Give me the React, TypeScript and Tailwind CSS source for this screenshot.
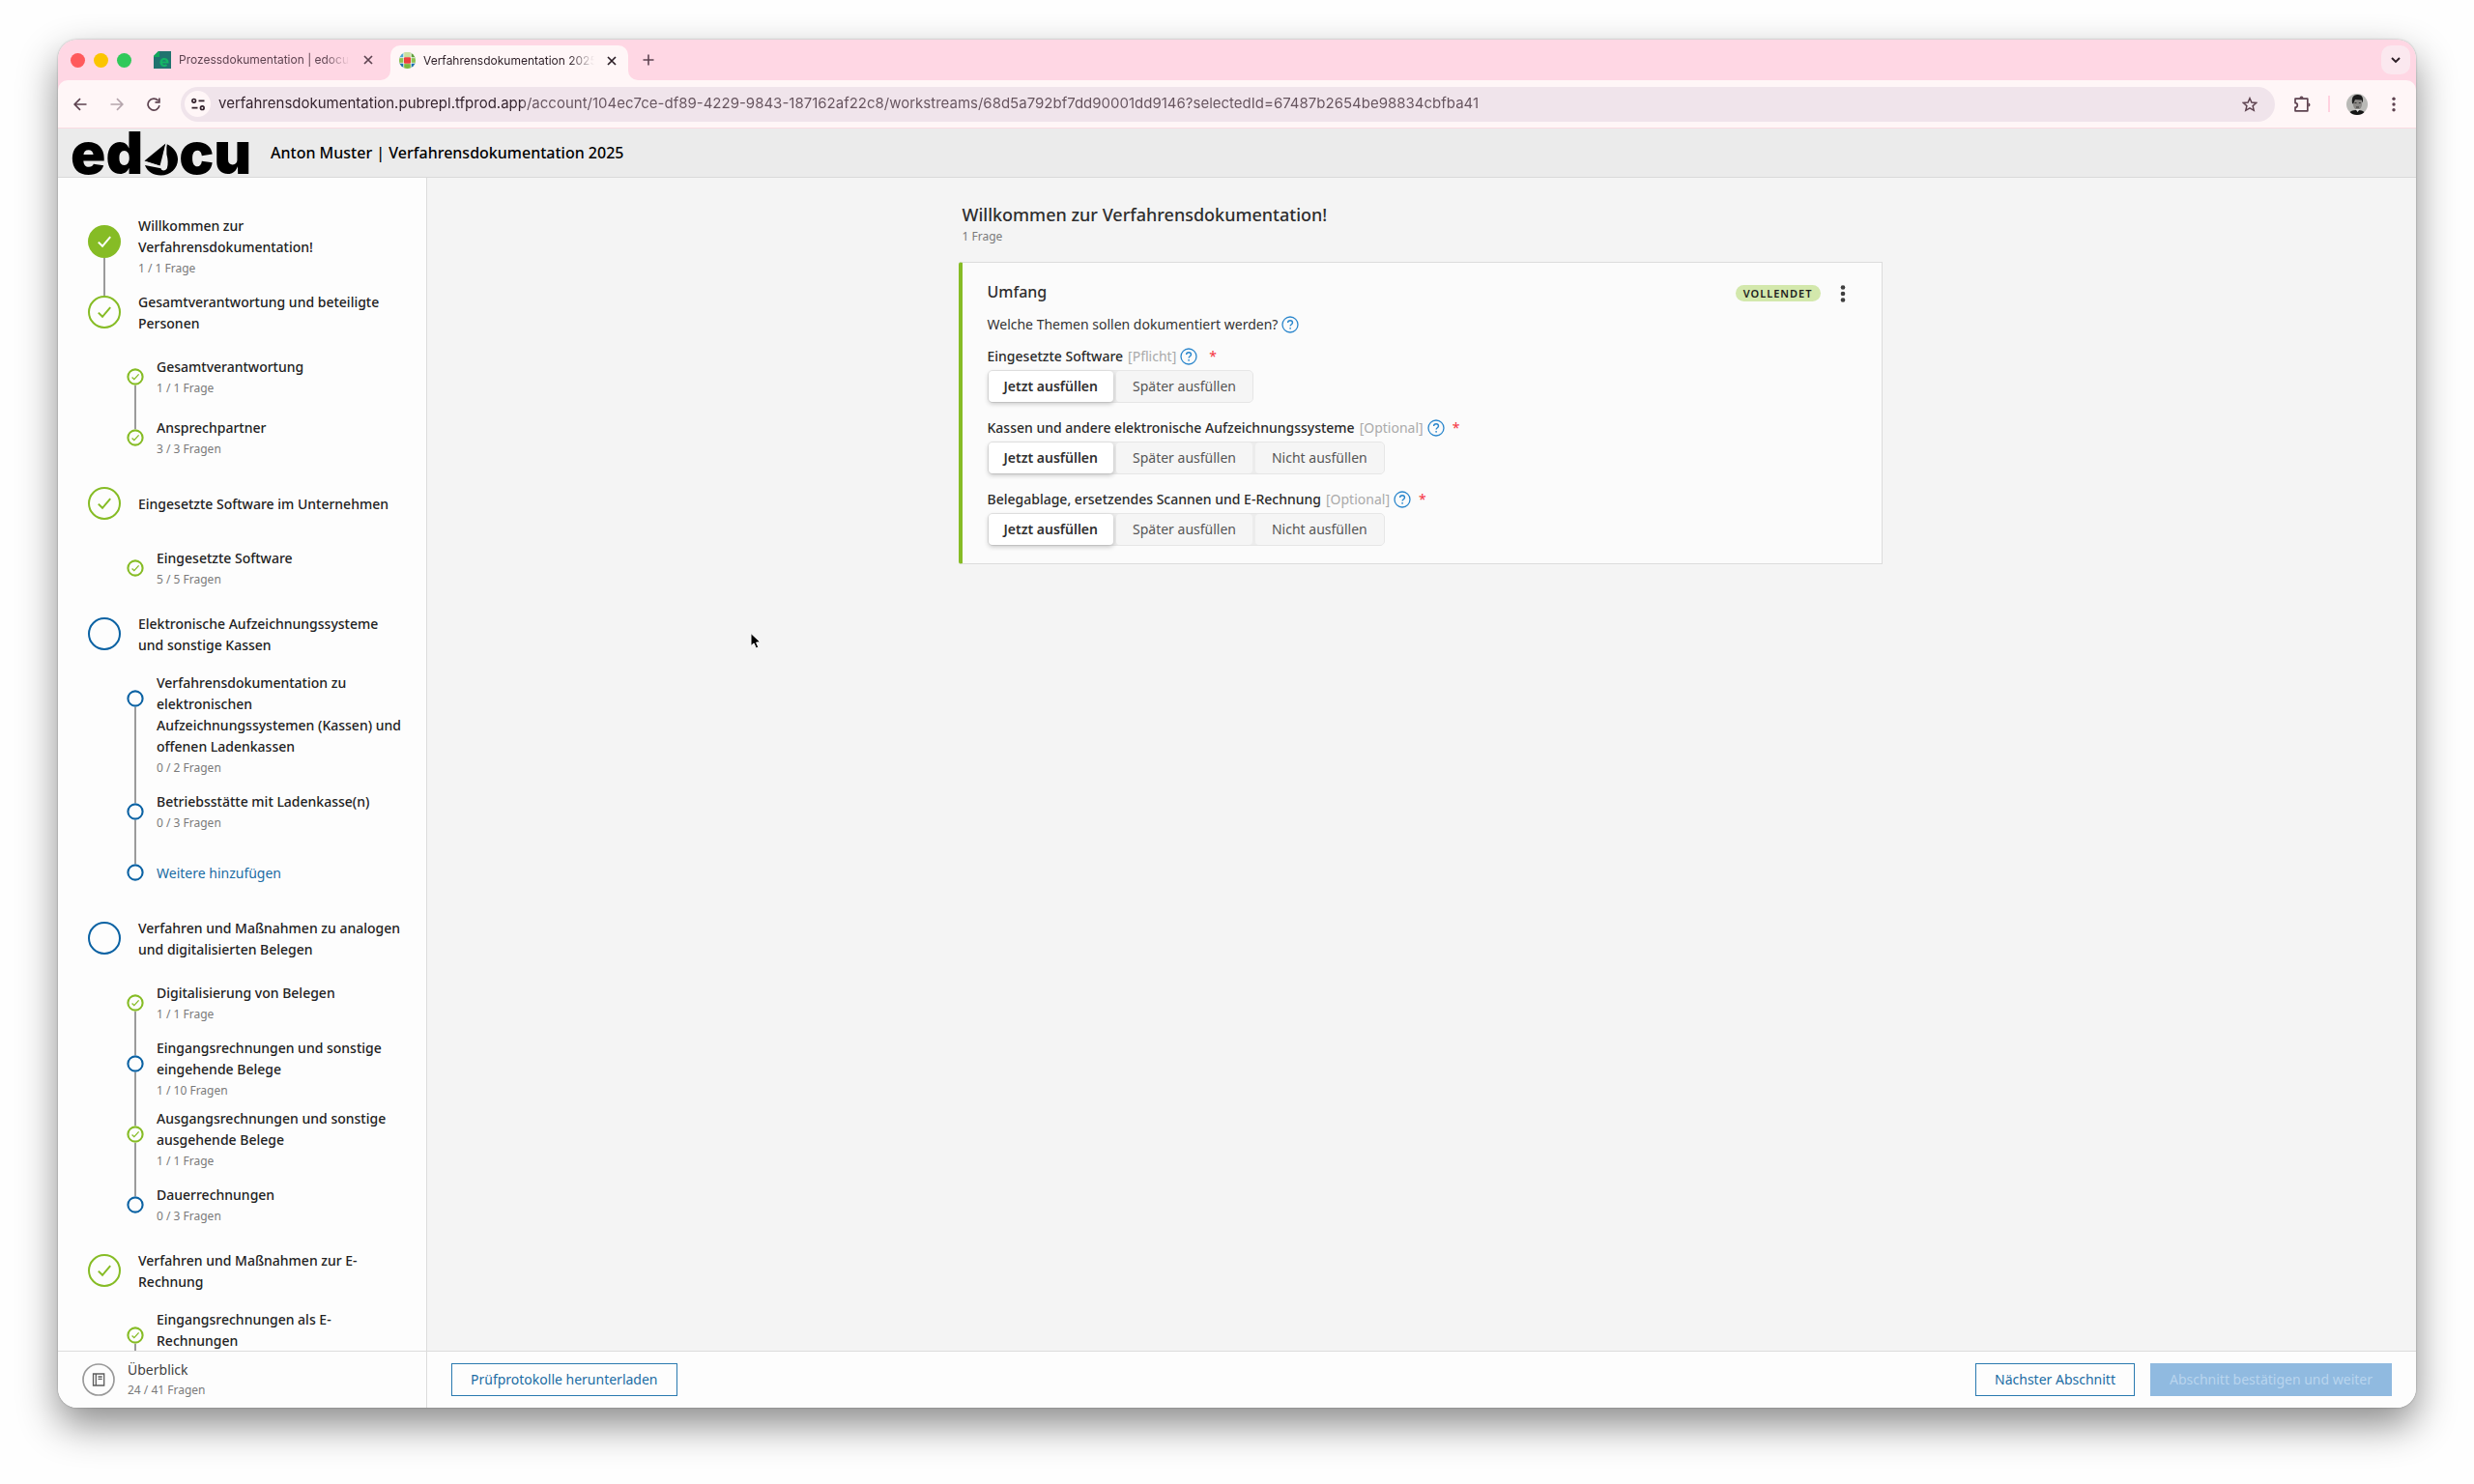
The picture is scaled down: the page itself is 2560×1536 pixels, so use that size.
import React from "react";

type Status = "filled" | "done" | "open";

interface Step {
  title: string;
  count?: string;
  status: Status;
  link?: boolean;
}

interface Section {
  step: Step;
  children: Step[];
  continues?: boolean;
}

const INTRO: Step = { title: "Willkommen zur Verfahrensdokumentation!", count: "1 / 1 Frage", status: "filled" };

const SECTIONS: Section[] = [
  {
    step: { title: "Gesamtverantwortung und beteiligte Personen", status: "done" },
    children: [
      { title: "Gesamtverantwortung", count: "1 / 1 Frage", status: "done" },
      { title: "Ansprechpartner", count: "3 / 3 Fragen", status: "done" },
    ],
  },
  {
    step: { title: "Eingesetzte Software im Unternehmen", status: "done" },
    children: [{ title: "Eingesetzte Software", count: "5 / 5 Fragen", status: "done" }],
  },
  {
    step: { title: "Elektronische Aufzeichnungssysteme und sonstige Kassen", status: "open" },
    children: [
      {
        title: "Verfahrensdokumentation zu elektronischen Aufzeichnungssystemen (Kassen) und offenen Ladenkassen",
        count: "0 / 2 Fragen",
        status: "open",
      },
      { title: "Betriebsstätte mit Ladenkasse(n)", count: "0 / 3 Fragen", status: "open" },
      { title: "Weitere hinzufügen", status: "open", link: true },
    ],
  },
  {
    step: { title: "Verfahren und Maßnahmen zu analogen und digitalisierten Belegen", status: "open" },
    children: [
      { title: "Digitalisierung von Belegen", count: "1 / 1 Frage", status: "done" },
      { title: "Eingangsrechnungen und sonstige eingehende Belege", count: "1 / 10 Fragen", status: "open" },
      { title: "Ausgangsrechnungen und sonstige ausgehende Belege", count: "1 / 1 Frage", status: "done" },
      { title: "Dauerrechnungen", count: "0 / 3 Fragen", status: "open" },
    ],
  },
  {
    step: { title: "Verfahren und Maßnahmen zur E-Rechnung", status: "done" },
    children: [{ title: "Eingangsrechnungen als E-Rechnungen", count: "", status: "done" }],
    continues: true,
  },
];

function StepIcon({ status, small }: { status: Status; small?: boolean }) {
  const color = status === "open" ? "#0b62a3" : "#86bc25";
  if (small) {
    return (
      <svg className="size-[18px] shrink-0" viewBox="0 0 18 18" fill="none" aria-hidden="true">
        <circle cx="9" cy="9" r="7.6" stroke={color} strokeWidth="2.1" fill="#fdfdfd" />
        {status === "done" && <path d="M5.6 9.5l2.2 2.1 4.8-5.2" stroke={color} strokeWidth="1.3" />}
      </svg>
    );
  }
  return (
    <svg className="size-[34px] shrink-0" viewBox="0 0 34 34" fill="none" aria-hidden="true">
      <circle cx="17" cy="17" r="16" stroke={color} strokeWidth="2" fill={status === "filled" ? color : "none"} />
      {status !== "open" && (
        <path d="M10.8 17.6l4.2 4.2 8.2-9.6" stroke={status === "filled" ? "#fff" : color} strokeWidth="2" />
      )}
    </svg>
  );
}

function StepRow({ step, small, before, after }: { step: Step; small?: boolean; before?: boolean; after?: boolean }) {
  return (
    <li className={small ? "flex min-h-[63px] gap-[13px] pl-[71px] pr-5" : "flex min-h-[63px] gap-[18px] pl-[31px] pr-5"}>
      <div className="flex shrink-0 flex-col items-center">
        <span className={`${small ? "h-[22px]" : "h-[14px]"} w-[2px] shrink-0 ${before ? "bg-[#9b9b9b]" : ""}`} />
        <StepIcon status={step.status} small={small} />
        <span className={`w-[2px] flex-1 ${after ? "bg-[#9b9b9b]" : ""}`} />
      </div>
      <div className="flex flex-1 flex-col justify-center py-1">
        <button
          type="button"
          className={
            step.link
              ? "text-left text-sm leading-[22px] text-[#1b6ca3]"
              : "text-left text-sm font-medium leading-[22px] text-[#222222]"
          }
        >
          {step.title}
        </button>
        {step.count !== undefined && (
          <p className="min-h-[21px] text-xs leading-[21px] text-[#7a7a7a]">{step.count}</p>
        )}
      </div>
    </li>
  );
}

function Sidebar() {
  return (
    <aside className="flex w-[382px] shrink-0 flex-col border-r border-[#dcdcdc] bg-[#fdfdfd]">
      <nav className="min-h-0 flex-1 overflow-hidden pt-[35px]" aria-label="Abschnitte">
        <ul>
          <StepRow step={INTRO} after />
          {SECTIONS.map((s, i) => (
            <React.Fragment key={s.step.title}>
              <StepRow step={s.step} before={i === 0} />
              <li>
                <ul className="mb-[5px] mt-1">
                  {s.children.map((c, j) => (
                    <StepRow
                      key={c.title}
                      step={c}
                      small
                      before={j > 0}
                      after={j < s.children.length - 1 || s.continues}
                    />
                  ))}
                </ul>
              </li>
            </React.Fragment>
          ))}
        </ul>
      </nav>
      <div className="flex h-[59px] shrink-0 items-center gap-[13px] border-t border-[#dcdcdc] pl-[25px]">
        <svg className="size-[34px] shrink-0" viewBox="0 0 34 34" fill="none" aria-hidden="true">
          <circle cx="17" cy="17" r="16" stroke="#9a9a9a" strokeWidth="1.7" />
          <path d="M11.5 11h11.2v12H11.5zM14.3 11v12M16.5 14h4.2M16.5 16.4h4.2" stroke="#5c5c5c" strokeWidth="1.3" />
        </svg>
        <div>
          <button type="button" className="block text-left text-sm leading-[21px] text-[#3f3f3f]">Überblick</button>
          <p className="text-xs leading-[21px] text-[#7a7a7a]">24 / 41 Fragen</p>
        </div>
      </div>
    </aside>
  );
}

function Help() {
  return (
    <button type="button" className="ml-1 shrink-0" aria-label="Hilfe">
      <svg className="size-[18px]" viewBox="0 0 18 18" fill="none" stroke="#2a86cc">
        <circle cx="9" cy="9" r="8" strokeWidth="1.3" />
        <path d="M6.6 7.1c0-1.5 1-2.4 2.5-2.4s2.4.9 2.4 2.2c0 1.9-2.4 1.8-2.4 3.7" strokeWidth="1.4" />
        <circle cx="9.1" cy="12.8" r=".9" fill="#2a86cc" stroke="none" />
      </svg>
    </button>
  );
}

function Question({ name, label, kind, options }: { name: string; label: string; kind: string; options: string[] }) {
  return (
    <fieldset className="min-w-0">
      <legend className="flex h-[22px] items-center text-sm leading-[22px]">
        <span className="font-medium text-[#2b2b2b]">{label}</span>
        <span className="ml-[5px] text-[#aaaaaa]">[{kind}]</span>
        <Help />
        <span className={kind === "Pflicht" ? "ml-3 text-[#f5333f]" : "ml-2 text-[#f5333f]"}>*</span>
      </legend>
      <div className="mb-[15px] mt-[3px] flex w-fit gap-[3px] rounded-[5px] border border-[#e6e6e6] bg-[#ececec]">
        {options.map((o, i) => (
          <label
            key={o}
            className="relative flex h-8 cursor-pointer items-center rounded-[4px] bg-[#f5f5f5] px-[17px] text-sm text-[#555555] has-checked:bg-white has-checked:px-4 has-checked:font-semibold has-checked:text-[#303030] has-checked:shadow-[0_2px_5px_rgba(0,0,0,0.22)]"
          >
            <input type="radio" name={name} defaultChecked={i === 0} className="sr-only" />
            {o}
          </label>
        ))}
      </div>
    </fieldset>
  );
}

const OPTIONS = ["Jetzt ausfüllen", "Später ausfüllen", "Nicht ausfüllen"];

function Content() {
  return (
    <main className="min-h-0 flex-1 overflow-hidden bg-[#f4f4f4] pr-[3px] pt-6">
      <div className="mx-auto max-w-[956px]">
        <header className="pl-1">
          <h1 className="text-lg font-medium leading-7 text-[#2e2e2e]">Willkommen zur Verfahrensdokumentation!</h1>
          <p className="text-xs leading-[18px] text-[#7a7a7a]">1 Frage</p>
        </header>
        <section className="mt-[17px] rounded-l-[3px] border border-l-4 border-[#dcdcdc] border-l-[#86bc25] bg-[#fbfbfb] pb-[3px] pl-[26px] pr-[33px] pt-[18px]">
          <div className="flex items-center justify-between">
            <h2 className="text-base font-medium leading-6 text-[#2e2e2e]">Umfang</h2>
            <div className="flex items-center gap-[16px] pt-[3px]">
              <span className="rounded-full bg-[#d3e8ac] px-2 text-[11px] font-semibold leading-[17px] tracking-[1px] text-[#1d1d1d]">
                VOLLENDET
              </span>
              <button type="button" aria-label="Menü">
                <svg className="h-[18px] w-[14px]" viewBox="0 0 14 18" fill="#3f3f3f">
                  <circle cx="7" cy="2.5" r="2.3" />
                  <circle cx="7" cy="9" r="2.3" />
                  <circle cx="7" cy="15.5" r="2.3" />
                </svg>
              </button>
            </div>
          </div>
          <p className="mb-[11px] mt-[11px] flex items-center text-sm leading-[22px] text-[#333333]">
            Welche Themen sollen dokumentiert werden?
            <Help />
          </p>
          <Question name="software" label="Eingesetzte Software" kind="Pflicht" options={OPTIONS.slice(0, 2)} />
          <Question name="kassen" label="Kassen und andere elektronische Aufzeichnungssysteme" kind="Optional" options={OPTIONS} />
          <Question name="belege" label="Belegablage, ersetzendes Scannen und E-Rechnung" kind="Optional" options={OPTIONS} />
        </section>
      </div>
    </main>
  );
}

function EdocuLogo() {
  return (
    <div
      className="flex h-full w-[207px] shrink-0 items-center font-['Inter',sans-serif] text-[60px] font-black leading-[50px] text-black"
      aria-label="edocu"
    >
      <span>ed</span>
      <svg className="mt-[14px] h-[36px] w-[37px]" viewBox="0 0 38 36" aria-hidden="true">
        <path d="M25 1.500C32 4.500 37 10.500 37 18c0 9.500-8 17-18 17C11 35 4.500 31 2 24.200l17 3.300c.8 3.500 5.500 2.800 6.600-.5 1.200-4 1-9-.5-14.500z" />
        <path d="M24 1L1.500 19.500 18 25z" />
        <path d="M24.800 1.500l-5.300 24.300L1.500 20.500" fill="none" stroke="#ebebeb" strokeWidth="1.400" />
      </svg>
      <span>cu</span>
    </div>
  );
}

function Cross() {
  return (
    <svg className="size-[10px]" viewBox="0 0 10 10" fill="none" stroke="currentColor" strokeWidth="1.7" aria-hidden="true">
      <path d="M1 1l8 8M9 1L1 9" />
    </svg>
  );
}

function TabBar() {
  return (
    <div className="flex h-[42px] shrink-0 items-end bg-[#ffd7e4] pl-[13px] pr-[6px]">
      <div className="flex h-full w-[86px] shrink-0 items-center gap-[9px]">
        <button type="button" aria-label="Schließen" className="size-[15px] rounded-full bg-[#ff5a5c]" />
        <button type="button" aria-label="Minimieren" className="size-[15px] rounded-full bg-[#fbc500]" />
        <button type="button" aria-label="Maximieren" className="size-[15px] rounded-full bg-[#30c95a]" />
      </div>
      <div className="flex h-full w-[245px] items-center text-[#5e4350]">
        <svg className="size-[18px] shrink-0" viewBox="0 0 18 18" aria-hidden="true">
          <path d="M5 0h13v18H0V5z" fill="#20736f" />
          <path d="M0 5L5 0h1v6H0z" fill="#12a85c" />
          <path d="M7.500 11.500h7a3.500 3.500 0 1 0-1 2.500" fill="none" stroke="#12b565" strokeWidth="2.200" />
        </svg>
        <span className="ml-2 w-[177px] overflow-hidden whitespace-nowrap text-xs mask-r-from-85%">
          Prozessdokumentation | edocu
        </span>
        <button type="button" aria-label="Tab schließen" className="ml-[14px]"><Cross /></button>
      </div>
      <div className="relative flex h-[36px] w-[246px] items-center rounded-t-[10px] bg-[#fff6f7] pb-[5px] pl-[9px] text-[#2b1d25]">
        <svg className="absolute -left-[10px] bottom-0 size-[10px]" viewBox="0 0 10 10" aria-hidden="true">
          <path d="M10 0v10H0A10 10 0 0 0 10 0z" fill="#fff6f7" />
        </svg>
        <svg className="absolute -right-[10px] bottom-0 size-[10px]" viewBox="0 0 10 10" aria-hidden="true">
          <path d="M0 0v10h10A10 10 0 0 1 0 0z" fill="#fff6f7" />
        </svg>
        <svg className="size-[17px] shrink-0" viewBox="0 0 18 18" aria-hidden="true">
          <clipPath id="globe"><circle cx="9" cy="9" r="9" /></clipPath>
          <g clipPath="url(#globe)">
            <rect width="18" height="18" fill="#b8d98a" />
            <path d="M0 6h5v6H0zM13 6h5v6h-5z" fill="#8cc152" />
            <path d="M5 0h8v5H5z" fill="#c9dfa0" />
            <path d="M0 0h5v6H0z" fill="#4ba3d8" />
            <path d="M5 13h8v5H5z" fill="#7cb83e" />
            <path d="M0 12h5v6H0zM13 12h5v6h-5z" fill="#1c6fb0" />
            <path d="M13 0h5v6h-5z" fill="#5f9e3c" />
            <path d="M5 0v18M13 0v18M0 6h18M0 12h18" stroke="#fff" strokeWidth=".8" />
            <rect x="5.300" y="5.500" width="7.400" height="7" rx="1" fill="#ee3f3f" />
          </g>
        </svg>
        <span className="ml-2 w-[177px] overflow-hidden whitespace-nowrap text-xs mask-r-from-85%">
          Verfahrensdokumentation 2025
        </span>
        <button type="button" aria-label="Tab schließen" className="ml-[13px]"><Cross /></button>
      </div>
      <button type="button" aria-label="Neuer Tab" className="ml-[15px] self-center text-[#5e4350]">
        <svg className="size-[12px]" viewBox="0 0 12 12" stroke="currentColor" strokeWidth="1.6" aria-hidden="true">
          <path d="M6 .5v11M.5 6h11" />
        </svg>
      </button>
      <button
        type="button"
        aria-label="Tabs durchsuchen"
        className="mb-[6px] ml-auto flex size-[30px] items-center justify-center rounded-[10px] bg-[#fbe8ef] text-[#2b1d25]"
      >
        <svg className="size-[10px]" viewBox="0 0 10 10" fill="none" stroke="currentColor" strokeWidth="1.900" aria-hidden="true">
          <path d="M1 3l4 4 4-4" />
        </svg>
      </button>
    </div>
  );
}

function Toolbar() {
  return (
    <div className="flex h-[50px] shrink-0 items-center border-b border-[#fadbe2] bg-[#fff6f7] pl-4 pr-4 text-[#5e4350]">
      <button type="button" aria-label="Zurück">
        <svg className="size-[14px]" viewBox="0 0 14 14" fill="none" stroke="currentColor" strokeWidth="1.700">
          <path d="M13.500 7H1.500M7 1.200L1.200 7 7 12.800" />
        </svg>
      </button>
      <button type="button" aria-label="Vorwärts" className="ml-6 text-[#b5a5ac]">
        <svg className="size-[14px]" viewBox="0 0 14 14" fill="none" stroke="currentColor" strokeWidth="1.700">
          <path d="M.5 7h12M7 1.200L12.800 7 7 12.800" />
        </svg>
      </button>
      <button type="button" aria-label="Neu laden" className="ml-6">
        <svg className="size-[14px]" viewBox="0 0 14 14" fill="none" stroke="currentColor" strokeWidth="1.700">
          <path d="M11.700 3.200A6 6 0 1 0 13 8.200M12.900.5v4.300H8.500" />
        </svg>
      </button>
      <div className="ml-[21px] flex h-[36px] flex-1 items-center rounded-full bg-[#f0e4eb] pl-1 pr-[18px]">
        <button
          type="button"
          aria-label="Websiteinformationen"
          className="flex size-[27px] shrink-0 items-center justify-center rounded-full bg-[#fff6f7] text-[#33222c]"
        >
          <svg className="size-[14px]" viewBox="0 0 14 14" fill="none" stroke="currentColor" strokeWidth="1.700">
            <circle cx="2.700" cy="3.300" r="1.800" />
            <circle cx="11.300" cy="10.700" r="1.800" />
            <path d="M7.500 3.300h6M.5 10.700h6" />
          </svg>
        </button>
        <input
          type="text"
          aria-label="Adresse"
          readOnly
          className="ml-2 min-w-0 flex-1 bg-[linear-gradient(to_right,#33222c_315px,#65535d_315px)] bg-clip-text text-[15px] text-transparent outline-none"
          value="verfahrensdokumentation.pubrepl.tfprod.app/account/104ec7ce-df89-4229-9843-187162af22c8/workstreams/68d5a792bf7dd90001dd9146?selectedId=67487b2654be98834cbfba41"
        />
        <button type="button" aria-label="Lesezeichen">
          <svg className="size-[16px]" viewBox="0 0 16 16" fill="none" stroke="currentColor" strokeWidth="1.500">
            <path d="M8 1.700l1.900 4.400 4.800.4-3.600 3.100 1.100 4.700L8 11.800l-4.200 2.500 1.100-4.700L1.300 6.500l4.800-.4z" />
          </svg>
        </button>
      </div>
      <button type="button" aria-label="Erweiterungen" className="ml-[19px]">
        <svg className="size-[18px]" viewBox="0 0 18 18" fill="none" stroke="currentColor" strokeWidth="1.700">
          <path d="M2 3.200h12.800v12.600H2v-3.600a2.300 2.300 0 0 0 0-4.600z" strokeLinejoin="round" />
          <path d="M6.500 2.500a2 2 0 0 1 4 0zM15.500 7.500a2 2 0 0 1 0 4z" fill="currentColor" stroke="none" />
        </svg>
      </button>
      <span className="ml-[18px] h-[17px] w-[2px] bg-[#ffd2e0]" />
      <button type="button" aria-label="Profil" className="ml-[17px]">
        <svg className="size-[22px]" viewBox="0 0 22 22" aria-hidden="true">
          <clipPath id="avatar"><circle cx="11" cy="11" r="11" /></clipPath>
          <g clipPath="url(#avatar)">
            <rect width="22" height="22" fill="#b9b9b6" />
            <path d="M2 22c1-4 4-5 9-5s8 1 9 5z" fill="#151515" />
            <ellipse cx="11.500" cy="10.500" rx="4.600" ry="6.200" fill="#8b8986" />
            <path d="M6 10C5 3 8 .500 12 1c4 0 6 3 4.800 8.500L15.500 6.500 9 6 7 10.500z" fill="#1b1b1b" />
            <path d="M8.500 9.500h2M12.800 9.500h2M10 14h3" stroke="#333" strokeWidth="1" />
            <path d="M9.500 16l2 3 2.500-3z" fill="#ddd" />
          </g>
        </svg>
      </button>
      <button type="button" aria-label="Menü" className="ml-5">
        <svg className="h-[16px] w-[14px]" viewBox="0 0 14 16" fill="currentColor">
          <circle cx="7" cy="2.300" r="1.700" />
          <circle cx="7" cy="8" r="1.700" />
          <circle cx="7" cy="13.700" r="1.700" />
        </svg>
      </button>
    </div>
  );
}

export default function App() {
  return (
    <div className="relative flex h-screen bg-[#fefefe] px-[60px] pb-[79px] pt-[41px] font-['Noto_Sans',sans-serif]">
      <div className="flex min-w-0 flex-1 flex-col overflow-hidden rounded-[20px] bg-[#fdfdfd] shadow-[0_18px_40px_rgba(0,0,0,0.45),0_0_2px_rgba(0,0,0,0.35)]">
        <div className="shrink-0 font-['Inter',sans-serif]">
          <TabBar />
          <div className="overflow-hidden bg-[#ffd7e4]">
            <div className="overflow-hidden rounded-t-[10px]">
              <Toolbar />
            </div>
          </div>
        </div>
        <header className="flex h-[51px] shrink-0 items-center border-b border-[#d9d9d9] bg-[#ebebeb] pl-[13px]">
          <EdocuLogo />
          <p className="text-base font-medium text-black">Anton Muster | Verfahrensdokumentation 2025</p>
        </header>
        <div className="flex min-h-0 flex-1">
          <Sidebar />
          <div className="flex min-w-0 flex-1 flex-col">
            <Content />
            <footer className="flex h-[59px] shrink-0 items-center gap-4 border-t border-[#dcdcdc] bg-[#fdfdfd] px-[25px]">
              <button type="button" className="mr-auto h-[34px] border border-[#2a7ab0] px-[19px] text-sm text-[#1b6ca3]">
                Prüfprotokolle herunterladen
              </button>
              <button type="button" className="h-[34px] border border-[#2a7ab0] px-[19px] text-sm text-[#1b6ca3]">
                Nächster Abschnitt
              </button>
              <button type="button" disabled className="h-[34px] bg-[#90bae0] px-5 text-sm text-[#b9d5ee]">
                Abschnitt bestätigen und weiter
              </button>
            </footer>
          </div>
        </div>
      </div>
      <svg className="pointer-events-none absolute left-[775px] top-[654px] h-[20px] w-[14px]" viewBox="0 0 14 20" aria-hidden="true">
        <path d="M2 1.500v13l3.100-2.600 2.200 5 2.500-1-2.200-4.900 4.200-.3z" fill="#000" stroke="#fff" strokeWidth="1" />
      </svg>
    </div>
  );
}
